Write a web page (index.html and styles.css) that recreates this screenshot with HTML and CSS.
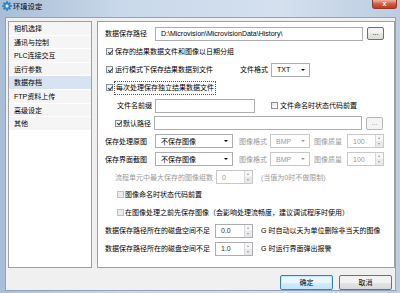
FILE: index.html
```html
<!DOCTYPE html>
<html lang="zh-CN">
<head>
  <meta charset="UTF-8">
  <title>环境设定</title>
  <link rel="stylesheet" href="styles.css">
</head>
<body>
  <div class="titlebar">
    <svg class="app-icon" viewBox="-5 -5 10 10">
      <g fill="#2f86cf">
        <rect x="-1" y="-4.8" width="2" height="9.6"/>
        <rect x="-1" y="-4.8" width="2" height="9.6" transform="rotate(45)"/>
        <rect x="-1" y="-4.8" width="2" height="9.6" transform="rotate(90)"/>
        <rect x="-1" y="-4.8" width="2" height="9.6" transform="rotate(135)"/>
        <circle r="3.4"/>
      </g>
      <circle r="1.5" fill="#fff"/>
    </svg>
    <span class="title">环境设定</span>
    <div class="close">x</div>
  </div>

  <div class="client">
    <div class="panes">
      <ul class="nav">
        <li>相机选择</li>
        <li>通讯与控制</li>
        <li>PLC连接交互</li>
        <li>运行参数</li>
        <li class="active">数据存档</li>
        <li>FTP资料上传</li>
        <li>高级设定</li>
        <li>其他</li>
      </ul>

      <div class="page">
        <div class="row">
          <span class="lbl">数据保存路径</span>
          <div class="field w-path">D:\Microvision\MicrovisionData\History\</div>
          <div class="dots">...</div>
        </div>
        <div class="row">
          <label class="check"><span class="cb on"></span>保存的结果数据文件和图像以日期分组</label>
        </div>
        <div class="row">
          <label class="check w-run"><span class="cb on"></span>运行模式下保存结果数据到文件</label>
          <span class="lbl-fmt">文件格式</span>
          <div class="select w-fmt">TXT</div>
        </div>
        <div class="row">
          <label class="check"><span class="cb on"></span><span class="focus">每次处理保存独立结果数据文件</span></label>
        </div>
        <div class="row">
          <span class="lbl-prefix">文件名前缀</span>
          <div class="field w-prefix"></div>
          <label class="check state-first"><span class="cb"></span>文件命名时状态代码前置</label>
        </div>
        <div class="row">
          <label class="check default-path"><span class="cb on"></span>默认路径</label>
          <div class="field w-path"></div>
          <div class="dots off">...</div>
        </div>
        <div class="row">
          <span class="lbl">保存处理原图</span>
          <div class="select w-img">不保存图像</div>
          <span class="lbl-off fmt">图像格式</span>
          <div class="select off w-bmp">BMP</div>
          <span class="lbl-off quality">图像质量</span>
          <div class="spin off w-q"><span>100</span><i class="arrows"></i></div>
        </div>
        <div class="row">
          <span class="lbl">保存界面截图</span>
          <div class="select w-img">不保存图像</div>
          <span class="lbl-off fmt">图像格式</span>
          <div class="select off w-bmp">BMP</div>
          <span class="lbl-off quality">图像质量</span>
          <div class="spin off w-q"><span>100</span><i class="arrows"></i></div>
        </div>
        <div class="row">
          <span class="lbl-off groups">流程单元中最大保存的图像组数</span>
          <div class="spin off w-n"><span>0</span><i class="arrows"></i></div>
          <span class="lbl-off note">(当值为0时不做限制)</span>
        </div>
        <div class="row">
          <label class="check sub"><span class="cb off"></span>图像命名时状态代码前置</label>
        </div>
        <div class="row">
          <label class="check sub"><span class="cb off"></span>在图像处理之前先保存图像（会影响处理流畅度，建议调试程序时使用）</label>
        </div>
        <div class="row">
          <span class="lbl-disk">数据保存路径所在的磁盘空间不足</span>
          <div class="spin w-g"><span>0.0</span><i class="arrows"></i></div>
          <span class="after">G 时自动以天为单位删除非当天的图像</span>
        </div>
        <div class="row">
          <span class="lbl-disk">数据保存路径所在的磁盘空间不足</span>
          <div class="spin w-g"><span>1.0</span><i class="arrows"></i></div>
          <span class="after">G 时运行界面弹出报警</span>
        </div>
      </div>
    </div>

    <div class="actions">
      <button class="btn primary">确定</button>
      <button class="btn">取消</button>
    </div>
  </div>
</body>
</html>
```

FILE: styles.css
```css
/* Win7 风格对话框 */
:root {
  --face: #f0f0f0;
  --edge: #abadb3;
  --list-edge: #a0a0a0;
  --gray-text: #9a9a9a;
  --select-bg: #d7e3f3;
}
* { box-sizing: border-box; margin: 0; padding: 0; }
body {
  width: 400px; height: 293px; overflow: hidden;
  font: 7px/1 "Liberation Sans", "Noto Sans CJK SC", sans-serif; color: #000;
  background: linear-gradient(90deg, #a9bed6, #c9d8ea 30%, #d4e0ee 70%, #bccde1);
}

.titlebar { height: 17px; display: flex; align-items: flex-start; padding: 1px 0 0 2px; }
.app-icon { width: 10px; height: 10px; }
.title { margin-left: 1px; line-height: 11px; font-size: 7.3px; }
.close {
  margin-left: auto; margin-right: 3px; margin-top: -1px; width: 25px; height: 9px;
  background: linear-gradient(#eeb3a3, #d35a42 50%, #c13a22); border: 1px solid #8d3a2a; border-top: none;
  border-radius: 0 0 3px 3px; color: #fff; font-size: 7px; line-height: 7px; text-align: center; font-weight: bold;
}

.client {
  margin-left: 5px; width: 391px; height: 274px; background: var(--face);
  border: 1px solid #8fa3bc; padding: 3px 0 0 2px; display: flex; flex-direction: column;
}
.panes { display: flex; gap: 5px; height: 247px; }

.nav { width: 84px; border: 1px solid var(--list-edge); background: #fff; list-style: none; }
.nav li { height: 13.6px; line-height: 13px; padding-left: 5px; background: #f5f5f5; border-bottom: 1px solid #fff; }
.nav li.active { background: var(--select-bg); }

.page { flex: 1; border: 1px solid var(--list-edge); background: #fff; padding: 3px 0 0 7px; }
.row { height: 17.9px; display: flex; align-items: center; white-space: nowrap; }

.lbl { width: 50px; }
.lbl-fmt { width: 31px; }
.lbl-prefix { margin-left: 12px; width: 38px; }
.lbl-off { color: var(--gray-text); }
.fmt { margin-left: 6px; width: 31px; }
.quality { margin-left: 4px; width: 33px; }
.groups { margin-left: 10px; width: 101px; }
.note { margin-left: 8px; }
.lbl-disk { width: 110px; }
.after { margin-left: 8px; }

.field { height: 14px; border: 1px solid var(--edge); background: #fff; padding-left: 5px; display: flex; align-items: center; }
.w-path { width: 208px; }
.w-prefix { width: 100px; }

.dots {
  margin-left: 4px; width: 17px; height: 13px; border: 1px solid #707070; border-radius: 2px;
  background: linear-gradient(#f2f2f2 50%, #e6e6e6 50%, #dcdcdc); text-align: center; line-height: 9px;
}
.dots.off { border-color: #b5b5b5; background: #f4f4f4; color: #8a8a8a; }

.check { display: flex; align-items: center; }
.cb {
  position: relative; width: 7px; height: 7px; margin: 0 2px 0 1px;
  border: 1px solid #8f8f8f; background: linear-gradient(135deg, #e6e6e6, #fff);
}
.cb.on::after {
  content: ""; position: absolute; left: 1.5px; top: -0.5px; width: 2px; height: 4px;
  border: solid #1f3a5f; border-width: 0 1px 1px 0; transform: rotate(40deg);
}
.cb.off { border-color: #c0c0c0; background: #ececec; }
.focus { padding: 2px 1px; line-height: 8px; outline: 1px dotted #555; }
.w-run { width: 135px; }
.state-first { margin-left: 15px; }
.default-path { width: 40px; margin-left: 9px; }
.default-path .cb { margin-right: 1px; }
.sub { margin-left: 11px; }
.sub .cb { margin-right: 1px; }

.select {
  position: relative; height: 14px; border: 1px solid var(--edge); background: #fff;
  padding-left: 5px; display: flex; align-items: center;
}
.select::after {
  content: ""; position: absolute; right: 4px; top: 5px;
  border: 2px solid transparent; border-top: 2.5px solid #000; border-bottom: none;
}
.select.off { color: var(--gray-text); border-color: #c8c8c8; }
.select.off::after { border-top-color: #9a9a9a; }
.w-fmt { width: 39px; }
.w-img { width: 78px; }
.w-bmp { width: 40px; }

.spin {
  position: relative; height: 14px; border: 1px solid var(--edge); background: #fff;
  padding-left: 5px; display: flex; align-items: center; color: #333;
}
.spin.off { color: var(--gray-text); border-color: #c8c8c8; }
.arrows {
  position: absolute; right: 0; top: 0; bottom: 0; width: 8px;
  border-left: 1px solid #d8d8d8; background: linear-gradient(#f6f6f6 50%, #e9e9e9 50%);
}
.arrows::before, .arrows::after {
  content: ""; position: absolute; left: 2px; border: 1.5px solid transparent;
}
.arrows::before { top: 2px; border-bottom: 2px solid #9a9a9a; border-top: none; }
.arrows::after { bottom: 2px; border-top: 2px solid #9a9a9a; border-bottom: none; }
.w-q { width: 37px; }
.w-n { width: 37px; }
.w-g { width: 38px; }

.actions { display: flex; justify-content: flex-end; gap: 6px; margin-top: 7px; padding-right: 3px; }
.btn {
  width: 53px; height: 15px; font: inherit; border: 1px solid #707070; border-radius: 2px;
  background: linear-gradient(#f2f2f2 50%, #e5e5e5 50%, #d9d9d9);
}
.btn.primary {
  border-color: #3c7fb1; box-shadow: inset 0 0 0 1px #c3e7fb;
  background: linear-gradient(#eaf6fd 50%, #d5eefc 50%, #bde4fa);
}
```
